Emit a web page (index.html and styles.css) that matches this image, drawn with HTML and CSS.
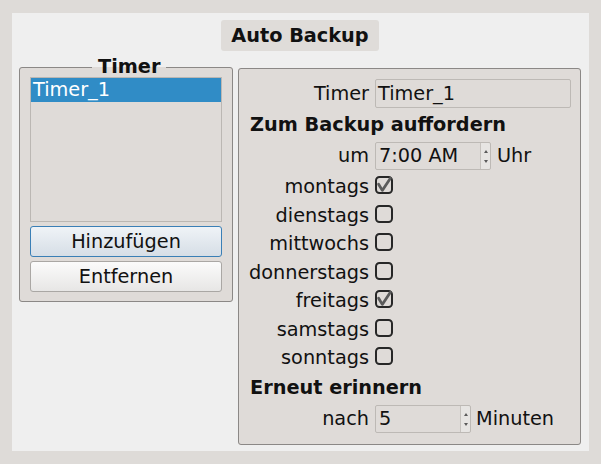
FILE: index.html
```html
<!DOCTYPE html>
<html lang="de">
<head>
<meta charset="utf-8">
<title>Auto Backup</title>
<link rel="stylesheet" href="styles.css">
</head>
<body>
<div class="window">
  <div class="panel">
    <div class="title-row"><div class="title">Auto Backup</div></div>
    <div class="content">
      <fieldset class="group timers">
        <legend>Timer</legend>
        <div class="list">
          <div class="item selected">Timer_1</div>
        </div>
        <button class="btn focused">Hinzufügen</button>
        <button class="btn">Entfernen</button>
      </fieldset>
      <fieldset class="group details">
        <div class="row field-row">
          <span class="label">Timer</span>
          <div class="input name">Timer_1</div>
        </div>
        <div class="heading">Zum Backup auffordern</div>
        <div class="row field-row">
          <span class="label">um</span>
          <div class="input spin time">
            <span class="spin-text">7:00 AM</span>
            <span class="arrows"><span class="up"></span><span class="down"></span></span>
          </div>
          <span class="unit">Uhr</span>
        </div>
        <div class="days">
          <div class="row day"><span class="label">montags</span><span class="check checked"><svg viewBox="0 0 18 18" width="18" height="18"><rect x="1" y="1" width="16" height="16" rx="3.5" class="box"/><path d="M3.6 8.2 L7.3 14.4 L15.4 2.2" class="tick"/></svg></span></div>
          <div class="row day"><span class="label">dienstags</span><span class="check"><svg viewBox="0 0 18 18" width="18" height="18"><rect x="1" y="1" width="16" height="16" rx="3.5" class="box"/></svg></span></div>
          <div class="row day"><span class="label">mittwochs</span><span class="check"><svg viewBox="0 0 18 18" width="18" height="18"><rect x="1" y="1" width="16" height="16" rx="3.5" class="box"/></svg></span></div>
          <div class="row day"><span class="label">donnerstags</span><span class="check"><svg viewBox="0 0 18 18" width="18" height="18"><rect x="1" y="1" width="16" height="16" rx="3.5" class="box"/></svg></span></div>
          <div class="row day"><span class="label">freitags</span><span class="check checked"><svg viewBox="0 0 18 18" width="18" height="18"><rect x="1" y="1" width="16" height="16" rx="3.5" class="box"/><path d="M3.6 8.2 L7.3 14.4 L15.4 2.2" class="tick"/></svg></span></div>
          <div class="row day"><span class="label">samstags</span><span class="check"><svg viewBox="0 0 18 18" width="18" height="18"><rect x="1" y="1" width="16" height="16" rx="3.5" class="box"/></svg></span></div>
          <div class="row day"><span class="label">sonntags</span><span class="check"><svg viewBox="0 0 18 18" width="18" height="18"><rect x="1" y="1" width="16" height="16" rx="3.5" class="box"/></svg></span></div>
        </div>
        <div class="heading remind">Erneut erinnern</div>
        <div class="row field-row">
          <span class="label">nach</span>
          <div class="input spin minutes">
            <span class="spin-text">5</span>
            <span class="arrows"><span class="up"></span><span class="down"></span></span>
          </div>
          <span class="unit minutes-unit">Minuten</span>
        </div>
      </fieldset>
    </div>
  </div>
</div>
</body>
</html>
```

FILE: styles.css
```css
* { box-sizing: border-box; }

html, body {
  margin: 0;
  padding: 0;
  background: #dedbd8;
}

body {
  font-family: "DejaVu Sans", "Liberation Sans", sans-serif;
  font-size: 19.3px;
  line-height: 22px;
  color: #111;
}

.window {
  width: 601px;
  height: 464px;
  padding: 13px 12px;
}

.panel {
  width: 577px;
  height: 438px;
  background: #efefef;
  padding: 7px 8px 0 7px;
}

.title-row {
  display: flex;
  justify-content: center;
}

.title {
  background: #dfdcd9;
  border-radius: 3px;
  font-weight: bold;
  height: 31px;
  line-height: 31px;
  padding: 0 10px 0 10px;
}

.content {
  display: flex;
  align-items: flex-start;
  gap: 5px;
  margin-top: 6px;
}

.group {
  margin: 0;
  min-inline-size: 0;
  border: 1px solid #8b8886;
  border-radius: 3px;
  background: #dfdbd8;
}

.timers {
  width: 214px;
  padding: 0 10px 9px 10px;
  display: flex;
  flex-direction: column;
}

.timers legend {
  font-weight: bold;
  line-height: 20px;
  padding: 0 6px;
  margin-left: 62px;
}

.list {
  height: 145px;
  border: 1px solid #bbb7b3;
  background: #dfdbd8;
}

.item {
  height: 24px;
  line-height: 24px;
  padding-left: 2px;
}

.item.selected {
  background: #308cc6;
  color: #fff;
}

.btn {
  display: block;
  width: 100%;
  height: 31px;
  margin-top: 4px;
  font: inherit;
  line-height: 22px;
  color: #111;
  border: 1px solid #aaa7a4;
  border-radius: 3px;
  background: linear-gradient(#fbfbfb, #e7e6e5);
  padding: 0;
}

.btn.focused {
  border-color: #3a7fb6;
  background: linear-gradient(#eff3f7, #d6dee6);
}

.details {
  width: 343px;
  height: 377px;
  margin-top: 11px;
  padding: 10px 9px 0 11px;
}

.row {
  display: flex;
  gap: 6px;
}

.field-row {
  align-items: center;
}

.label {
  width: 119px;
  flex: none;
  display: flex;
  justify-content: flex-end;
  white-space: nowrap;
}

.input {
  border: 1px solid #bdb9b5;
  border-radius: 2px;
  background: #dfdbd8;
  padding-left: 2px;
}

.name {
  width: 196px;
  height: 29px;
  line-height: 27px;
}

.heading {
  font-weight: bold;
  margin-top: 6px;
  margin-bottom: 6px;
  white-space: nowrap;
}

.spin {
  height: 28px;
  display: flex;
  padding-left: 3px;
}

.spin-text {
  flex: 1;
  line-height: 26px;
}

.time { width: 116px; }
.minutes { width: 96px; }

.minutes-unit { margin-left: -1px; }

.arrows {
  width: 10px;
  flex: none;
  border-left: 1px solid #c6c2be;
  background: #e7e5e3;
  display: flex;
  flex-direction: column;
  align-items: center;
  justify-content: space-between;
  padding: 7px 0 6px;
  border-radius: 0 2px 2px 0;
}

.up, .down {
  width: 0;
  height: 0;
  border-left: 2.5px solid transparent;
  border-right: 2.5px solid transparent;
}

.up { border-bottom: 3px solid #5a5a5a; }
.down { border-top: 3px solid #5a5a5a; }

.days {
  display: flex;
  flex-direction: column;
  gap: 6.5px;
  margin-top: 6px;
}

.day {
  align-items: flex-start;
}

.check {
  width: 18px;
  height: 18px;
  display: block;
}

.check svg { display: block; }

.box {
  fill: none;
  stroke: #272727;
  stroke-width: 2;
}

.tick {
  fill: none;
  stroke: #5b5b5b;
  stroke-width: 2.8;
  stroke-linecap: round;
  stroke-linejoin: round;
}

.remind {
  margin-top: 8px;
}
```
